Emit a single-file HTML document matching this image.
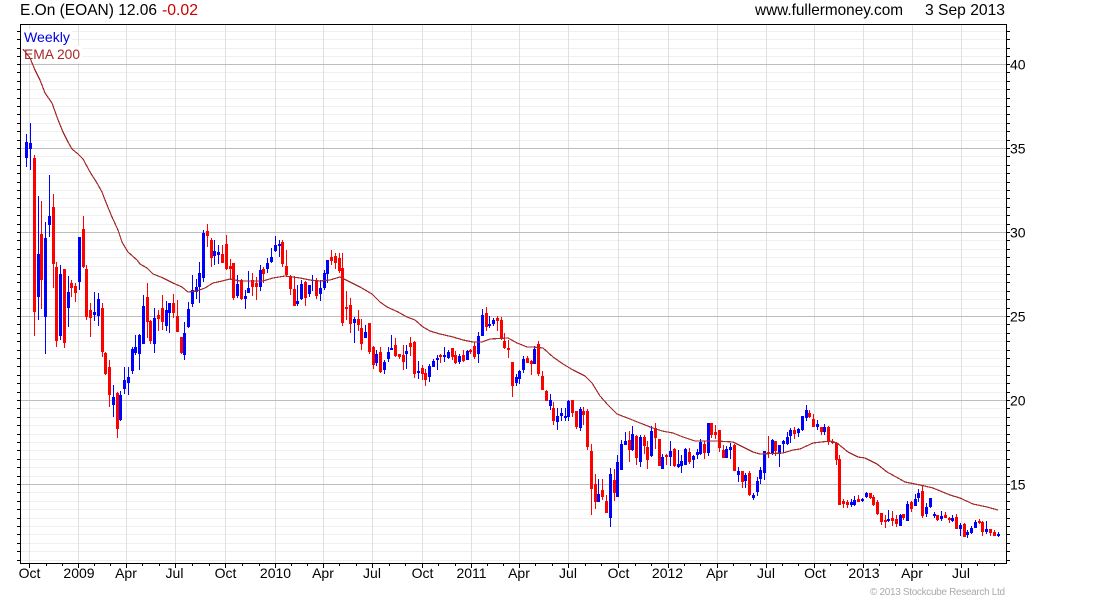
<!DOCTYPE html>
<html><head><meta charset="utf-8"><title>E.On (EOAN)</title>
<style>
html,body{margin:0;padding:0;background:#fff;width:1100px;height:600px;overflow:hidden}
svg{display:block}
text{font-family:"Liberation Sans",Arial,sans-serif;font-size:14px;fill:#000}
.b{text-anchor:middle}
</style></head><body>
<svg width="1100" height="600" viewBox="0 0 1100 600" xmlns="http://www.w3.org/2000/svg">
<defs><path id="r" d="M0 31.5H1M0 39.5H1M0 48.5H1M0 56.5H1M0 72.5H1M0 81.5H1M0 89.5H1M0 98.5H1M0 106.5H1M0 114.5H1M0 123.5H1M0 131.5H1M0 140.5H1M0 156.5H1M0 165.5H1M0 173.5H1M0 182.5H1M0 190.5H1M0 198.5H1M0 207.5H1M0 215.5H1M0 224.5H1M0 240.5H1M0 249.5H1M0 257.5H1M0 266.5H1M0 274.5H1M0 282.5H1M0 291.5H1M0 299.5H1M0 308.5H1M0 324.5H1M0 333.5H1M0 341.5H1M0 350.5H1M0 358.5H1M0 366.5H1M0 375.5H1M0 383.5H1M0 392.5H1M0 408.5H1M0 417.5H1M0 425.5H1M0 434.5H1M0 442.5H1M0 450.5H1M0 459.5H1M0 467.5H1M0 476.5H1M0 492.5H1M0 501.5H1M0 509.5H1M0 518.5H1M0 526.5H1M0 534.5H1M0 543.5H1M0 551.5H1M0 560.5H1" vector-effect="non-scaling-stroke"/></defs>
<g shape-rendering="crispEdges" fill="none">
<!-- ticks -->
<use href="#r" transform="translate(17 0) scale(993 1)" stroke="#000"/>
<path d="M17 64.5H1010M17 148.5H1010M17 232.5H1010M17 316.5H1010M17 400.5H1010M17 484.5H1010" stroke="#000"/>
<rect x="20" y="24" width="987" height="540" fill="#fff"/>
<!-- bottom ticks -->
<path d="M29.5 563V568M78.5 563V568M126.5 563V568M175.5 563V568M225.5 563V568M275.5 563V568M323.5 563V568M372.5 563V568M422.5 563V568M471.5 563V568M519.5 563V568M568.5 563V568M618.5 563V568M668.5 563V568M717.5 563V568M766.5 563V568M814.5 563V568M863.5 563V568M912.5 563V568M961.5 563V568" stroke="#000"/>
<path d="M46.5 563V566M62.5 563V566M94.5 563V566M110.5 563V566M142.5 563V566M159.5 563V566M192.5 563V566M209.5 563V566M242.5 563V566M259.5 563V566M291.5 563V566M307.5 563V566M339.5 563V566M356.5 563V566M389.5 563V566M405.5 563V566M438.5 563V566M455.5 563V566M487.5 563V566M503.5 563V566M535.5 563V566M552.5 563V566M585.5 563V566M601.5 563V566M635.5 563V566M651.5 563V566M684.5 563V566M700.5 563V566M733.5 563V566M750.5 563V566M782.5 563V566M798.5 563V566M830.5 563V566M847.5 563V566M879.5 563V566M895.5 563V566M928.5 563V566M945.5 563V566M977.5 563V566M994.5 563V566" stroke="#000"/>
<!-- grid -->
<use href="#r" transform="translate(21 0) scale(985 1)" stroke="#f0f0f0"/>
<path d="M29.5 25V563M78.5 25V563M126.5 25V563M175.5 25V563M225.5 25V563M275.5 25V563M323.5 25V563M372.5 25V563M422.5 25V563M471.5 25V563M519.5 25V563M568.5 25V563M618.5 25V563M668.5 25V563M717.5 25V563M766.5 25V563M814.5 25V563M863.5 25V563M912.5 25V563M961.5 25V563" stroke="#e0e0e0"/>
<path d="M21 64.5H1006M21 148.5H1006M21 232.5H1006M21 316.5H1006M21 400.5H1006M21 484.5H1006" stroke="#bdbdbd"/>
<!-- label backgrounds -->
<rect x="22" y="29" width="50" height="17" fill="#fff"/>
<rect x="22" y="46" width="60" height="17" fill="#fff"/>
</g>
<text x="24" y="42" textLength="46" lengthAdjust="spacingAndGlyphs" style="fill:#0000dd">Weekly</text>
<text x="24" y="59" textLength="56" lengthAdjust="spacingAndGlyphs" style="fill:#a52a2a">EMA 200</text>

<g shape-rendering="crispEdges" fill="none">
<!-- blue wicks -->
<path stroke="#0000ff" stroke-width="1" d="M26.5 134V167M30.5 123V170M38.5 196V320M45.5 222V354M49.5 175V237M60.5 265V340M68.5 276V327M79.5 237V290M94.5 292V321M98.5 293V326M113.5 385V417M120.5 391V421M124.5 367V394M128.5 367V395M132.5 347V374M135.5 335V355M139.5 334V370M143.5 295V344M154.5 308V353M166.5 301V331M169.5 303V333M184.5 322V360M188.5 302V328M192.5 275V307M196.5 279V299M199.5 262V303M203.5 230V282M214.5 240V265M218.5 245V264M237.5 275V298M245.5 290V309M248.5 271V293M260.5 265V291M267.5 258V273M271.5 248V263M275.5 236V252M279.5 240V257M297.5 285V306M301.5 280V300M309.5 285V297M312.5 275V291M320.5 280V301M324.5 270V290M327.5 260V283M354.5 317V343M365.5 325V338M376.5 350V366M384.5 360V374M388.5 347V362M391.5 335V350M406.5 345V369M418.5 361V379M429.5 364V382M433.5 359V367M437.5 355V370M444.5 347V362M448.5 350V359M459.5 354V364M467.5 350V360M478.5 332V363M482.5 309V336M489.5 316V328M493.5 318V326M516.5 374V386M519.5 370V384M523.5 356V373M534.5 346V364M550.5 394V410M557.5 408V430M561.5 408V421M565.5 408V421M568.5 400V421M580.5 407V431M598.5 479V502M610.5 468V527M617.5 455V497M621.5 440V470M625.5 432V445M632.5 426V451M640.5 435V467M651.5 426V457M662.5 454V469M670.5 441V466M678.5 450V468M681.5 455V473M685.5 448V465M693.5 455V468M697.5 449V459M700.5 439V455M708.5 423V456M726.5 446V458M730.5 443V459M738.5 467V482M745.5 473V488M753.5 493V500M757.5 477V496M760.5 467V484M764.5 451V480M772.5 439V455M779.5 445V467M783.5 440V453M787.5 432V445M790.5 428V443M798.5 428V437M802.5 416V431M806.5 405V421M817.5 420V430M824.5 424V435M851.5 499V507M854.5 496V506M862.5 498V502M866.5 492V498M888.5 510V522M900.5 514V526M907.5 501V521M915.5 494V506M918.5 489V502M926.5 503V517M930.5 498V508M934.5 512V518M941.5 511V521M952.5 515V522M960.5 523V536M967.5 530V538M971.5 526V534M975.5 520V528M986.5 521V534M998.5 532V537"/>
<!-- blue bodies -->
<path stroke="#0000ff" stroke-width="3" d="M26.5 142V158M30.5 143V149M38.5 254V297M45.5 238V317M49.5 216V225M60.5 274V336M68.5 292V308M79.5 237V282M94.5 312V315M98.5 299V316M113.5 397V405M120.5 395V420M124.5 380V389M128.5 377V383M132.5 349V371M135.5 347V353M139.5 335V354M143.5 306V344M154.5 318V344M166.5 310V326M169.5 303V313M184.5 333V355M188.5 309V327M192.5 290V304M196.5 287V292M199.5 273V287M203.5 233V278M214.5 251V256M218.5 252V255M237.5 284V296M245.5 296V299M248.5 288V293M260.5 270V287M267.5 263V269M271.5 257V262M275.5 245V251M279.5 244V246M297.5 301V304M301.5 284V299M309.5 285V294M312.5 280V281M320.5 288V294M324.5 273V288M327.5 260V274M354.5 319V323M365.5 332V338M376.5 354V363M384.5 362V370M388.5 352V359M391.5 348V350M406.5 351V354M418.5 371V373M429.5 366V377M433.5 361V367M437.5 358V360M444.5 355V357M448.5 352V358M459.5 356V362M467.5 351V360M478.5 336V354M482.5 315V336M489.5 324V326M493.5 320V324M516.5 377V383M519.5 371V379M523.5 359V370M534.5 349V364M550.5 400V406M557.5 416V422M561.5 413V416M565.5 416V418M568.5 401V417M580.5 409V428M598.5 494V502M610.5 474V518M617.5 462V497M621.5 444V470M625.5 441V445M632.5 434V450M640.5 437V462M651.5 431V456M662.5 457V469M670.5 451V457M678.5 464V467M681.5 461V466M685.5 449V465M693.5 456V460M697.5 452V455M700.5 442V454M708.5 423V453M726.5 449V458M730.5 447V450M738.5 471V475M745.5 475V481M753.5 495V498M757.5 481V492M760.5 470V479M764.5 451V473M772.5 440V454M779.5 445V454M783.5 441V444M787.5 437V444M790.5 430V436M798.5 429V433M802.5 416V430M806.5 410V418M817.5 424V427M824.5 427V432M851.5 502V505M854.5 500V505M862.5 499V501M866.5 493V497M888.5 519V521M900.5 515V526M907.5 504V521M915.5 499V506M918.5 493V498M926.5 507V514M930.5 498V507M934.5 514V516M941.5 516V519M952.5 518V521M960.5 525V529M967.5 532V535M971.5 528V533M975.5 522V528M986.5 529V532M998.5 534V536"/>
<!-- red wicks -->
<path stroke="#ff0000" stroke-width="1" d="M34.5 155V336M41.5 201V309M53.5 194V288M56.5 262V347M64.5 269V348M71.5 280V297M75.5 283V302M83.5 216V268M86.5 265V320M90.5 303V337M102.5 303V357M105.5 352V375M109.5 360V407M117.5 392V438M147.5 283V338M150.5 320V344M158.5 310V331M162.5 295V330M173.5 294V318M177.5 300V332M181.5 337V354M207.5 224V247M211.5 238V267M222.5 245V263M226.5 235V270M230.5 259V280M233.5 263V300M241.5 279V300M252.5 273V296M256.5 277V300M263.5 267V283M282.5 240V267M286.5 250V276M290.5 275V295M294.5 276V306M305.5 281V306M316.5 278V299M331.5 250V265M335.5 253V269M339.5 253V273M342.5 253V326M346.5 291V320M350.5 298V333M358.5 310V331M361.5 319V350M369.5 323V354M373.5 346V369M380.5 347V373M395.5 338V357M399.5 354V359M403.5 345V370M410.5 337V356M414.5 341V378M422.5 365V380M425.5 369V386M440.5 354V363M452.5 348V360M455.5 351V364M463.5 350V362M470.5 349V354M474.5 342V359M486.5 307V331M497.5 316V331M501.5 317V340M504.5 333V349M508.5 340V358M512.5 362V397M527.5 356V363M531.5 360V375M538.5 341V376M542.5 371V390M546.5 390V401M553.5 402V425M572.5 400V417M576.5 411V429M583.5 407V425M587.5 409V450M591.5 444V515M595.5 474V509M602.5 479V500M606.5 495V513M614.5 469V501M629.5 431V462M636.5 435V465M644.5 435V454M647.5 441V469M655.5 423V449M659.5 439V466M666.5 454V465M674.5 448V467M689.5 448V464M704.5 441V459M711.5 423V438M715.5 425V439M719.5 430V452M723.5 445V458M734.5 444V471M742.5 471V488M749.5 471V496M768.5 436V458M775.5 441V456M794.5 427V439M809.5 410V418M813.5 414V427M821.5 427V435M828.5 426V445M832.5 439V444M836.5 442V465M839.5 455V505M843.5 499V508M847.5 500V508M858.5 495V502M870.5 493V499M873.5 495V506M877.5 500V515M881.5 513V525M885.5 515V528M892.5 511V526M896.5 515V527M903.5 514V520M911.5 501V512M922.5 486V518M937.5 515V521M945.5 512V518M949.5 517V523M956.5 514V529M964.5 523V537M979.5 519V524M982.5 521V536M990.5 529V536M994.5 530V536"/>
<!-- red bodies -->
<path stroke="#ff0000" stroke-width="3" d="M34.5 158V312M41.5 234V280M53.5 207V264M56.5 267V341M64.5 269V343M71.5 283V288M75.5 286V293M83.5 229V267M86.5 269V317M90.5 310V318M102.5 308V352M105.5 353V374M109.5 367V395M117.5 393V429M147.5 297V322M150.5 321V341M158.5 315V319M162.5 308V322M173.5 303V313M177.5 316V332M181.5 337V353M207.5 231V236M211.5 240V258M222.5 254V263M226.5 244V269M230.5 266V269M233.5 263V298M241.5 280V299M252.5 280V287M256.5 283V287M263.5 269V274M282.5 242V264M286.5 266V275M290.5 276V289M294.5 289V306M305.5 282V298M316.5 280V296M331.5 257V261M335.5 256V263M339.5 258V271M342.5 268V323M346.5 307V309M350.5 305V324M358.5 319V325M361.5 328V344M369.5 323V352M373.5 347V365M380.5 352V372M395.5 345V356M399.5 354V357M403.5 355V362M410.5 343V347M414.5 342V374M422.5 368V374M425.5 373V380M440.5 355V357M452.5 348V357M455.5 355V363M463.5 355V361M470.5 350V352M474.5 346V357M486.5 313V327M497.5 318V321M501.5 320V338M504.5 341V348M508.5 348V350M512.5 362V386M527.5 358V363M531.5 361V364M538.5 344V374M542.5 376V390M546.5 391V401M553.5 408V421M572.5 400V413M576.5 411V427M583.5 411V415M587.5 411V447M591.5 451V489M595.5 484V502M602.5 490V497M606.5 501V513M614.5 480V493M629.5 440V450M636.5 436V458M644.5 437V446M647.5 447V460M655.5 428V438M659.5 439V466M666.5 455V457M674.5 449V466M689.5 452V462M704.5 444V453M711.5 423V435M715.5 432V435M719.5 430V448M723.5 450V458M734.5 445V471M742.5 471V482M749.5 473V495M768.5 452V454M775.5 441V451M794.5 430V434M809.5 413V417M813.5 419V427M821.5 427V432M828.5 427V442M832.5 441V443M836.5 443V460M839.5 459V505M843.5 501V504M847.5 502V505M858.5 499V502M870.5 493V498M873.5 497V505M877.5 502V514M881.5 513V522M885.5 520V522M892.5 518V521M896.5 519V524M903.5 514V518M911.5 502V509M922.5 491V516M937.5 515V520M945.5 515V518M949.5 518V520M956.5 517V529M964.5 524V537M979.5 521V523M982.5 522V532M990.5 529V533M994.5 532V536"/>
<!-- EMA -->
<polyline stroke="#a52a2a" stroke-width="1.2" points="23,49 30,58 35,70 40,80 45,93 52,103 57,117 63,132 68,142 72,149 78,154 83,159 90,172 97,183 102,192 105,200 112,217 118,230 122,242 128,252 137,260 140,264 147,268 153,274 163,278 173,283 182,287 188,292 197,291 205,288 213,283 222,281 230,279 240,281 253,281 263,281 273,278 285,276 300,278 310,280 320,281 330,280 340,277 350,282 360,287 372,294 380,302 387,307 398,312 407,317 415,320 423,327 430,331 440,334 453,337 463,340 473,342 482,342 490,339 508,338 517,343 527,347 533,347 543,348 553,357 563,364 573,370 585,376 592,383 600,396 608,405 617,414 630,419 640,423 650,427 662,431 673,433 683,437 695,441 717,441 733,442 743,447 753,452 760,454 783,453 793,450 800,449 813,443 830,441 837,443 848,452 858,457 865,458 877,464 887,472 898,478 905,482 920,485 933,488 950,495 960,498 973,504 987,507 998,510"/>
<!-- frame -->
<rect x="20.5" y="24.5" width="986" height="539" stroke="#000" stroke-width="1"/>
</g>

<text x="20" y="15" textLength="137" lengthAdjust="spacingAndGlyphs" style="font-size:16px">E.On (EOAN) 12.06</text>
<text x="162" y="15" textLength="36" lengthAdjust="spacingAndGlyphs" style="font-size:16px;fill:#cc0000">-0.02</text>
<text x="755" y="15" textLength="148" lengthAdjust="spacingAndGlyphs" style="font-size:16px">www.fullermoney.com</text>
<text x="925" y="15" textLength="80" lengthAdjust="spacingAndGlyphs" style="font-size:16px">3 Sep 2013</text>

<text x="1010" y="69.5">40</text>
<text x="1010" y="153.5">35</text>
<text x="1010" y="237.5">30</text>
<text x="1010" y="321.5">25</text>
<text x="1010" y="405.5">20</text>
<text x="1010" y="489.5">15</text>

<text class="b" x="29.5" y="578">Oct</text>
<text class="b" x="79" y="578">2009</text>
<text class="b" x="126" y="578">Apr</text>
<text class="b" x="174.5" y="578">Jul</text>
<text class="b" x="225.5" y="578">Oct</text>
<text class="b" x="275.5" y="578">2010</text>
<text class="b" x="323" y="578">Apr</text>
<text class="b" x="372" y="578">Jul</text>
<text class="b" x="422.5" y="578">Oct</text>
<text class="b" x="471.5" y="578">2011</text>
<text class="b" x="519" y="578">Apr</text>
<text class="b" x="568" y="578">Jul</text>
<text class="b" x="618.5" y="578">Oct</text>
<text class="b" x="667.5" y="578">2012</text>
<text class="b" x="717" y="578">Apr</text>
<text class="b" x="766" y="578">Jul</text>
<text class="b" x="815" y="578">Oct</text>
<text class="b" x="864" y="578">2013</text>
<text class="b" x="912" y="578">Apr</text>
<text class="b" x="961" y="578">Jul</text>

<text x="870" y="595" textLength="135" lengthAdjust="spacing" style="font-size:10px;fill:#aaaaaa">© 2013 Stockcube Research Ltd</text>
</svg>
</body></html>
